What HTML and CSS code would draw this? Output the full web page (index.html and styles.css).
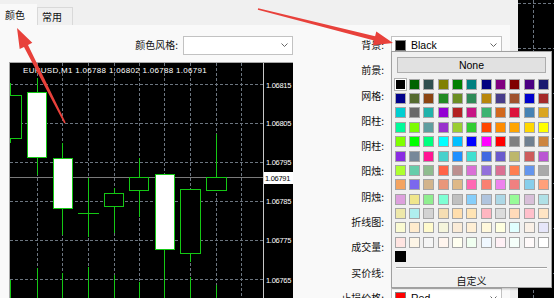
FILE: index.html
```html
<!DOCTYPE html>
<html>
<head>
<meta charset="utf-8">
<link rel="stylesheet" href="styles.css">
</head>
<body>
<div class="screen">
  <div class="dialog">
    <div class="tabs">
      <div class="tab active">颜色</div>
      <div class="tab">常用</div>
    </div>
    <div class="panel">
      <div class="left">
        <div class="style-row">
          <span class="label">颜色风格:</span>
          <div class="combo style-combo"><svg class="chev" width="7" height="4" viewBox="0 0 7 4"><path d="M0.5 0.5 L3.5 3.5 L6.5 0.5"/></svg></div>
        </div>
        <svg class="chart" width="284" height="236" viewBox="9 62 284 236">
          <rect x="9" y="62" width="284" height="236" fill="#000"/>
          <g class="grid">
            <line x1="10" y1="84.5" x2="263" y2="84.5"/>
            <line x1="10" y1="123.5" x2="263" y2="123.5"/>
            <line x1="10" y1="162.5" x2="263" y2="162.5"/>
            <line x1="10" y1="201.5" x2="263" y2="201.5"/>
            <line x1="10" y1="240.5" x2="263" y2="240.5"/>
            <line x1="10" y1="279.5" x2="263" y2="279.5"/>
            <line x1="37.5" y1="63" x2="37.5" y2="298"/>
            <line x1="62.5" y1="63" x2="62.5" y2="298"/>
            <line x1="88.5" y1="63" x2="88.5" y2="298"/>
            <line x1="114.5" y1="63" x2="114.5" y2="298"/>
            <line x1="139.5" y1="63" x2="139.5" y2="298"/>
            <line x1="164.5" y1="63" x2="164.5" y2="298"/>
            <line x1="190.5" y1="63" x2="190.5" y2="298"/>
            <line x1="216.5" y1="63" x2="216.5" y2="298"/>
            <line x1="241.5" y1="63" x2="241.5" y2="298"/>
          </g>
          <line class="bid" x1="10" y1="177.5" x2="263" y2="177.5"/>
          <g class="candles">
            <line x1="10.5" y1="83" x2="10.5" y2="143"/>
            <rect x="0.5" y="95.5" width="21" height="43" class="bear"/>
            <line x1="37.5" y1="78" x2="37.5" y2="175"/>
            <rect x="27.5" y="92.5" width="19" height="65" class="bull"/>
            <line x1="62.5" y1="143" x2="62.5" y2="235"/>
            <rect x="53.5" y="158.5" width="19" height="50" class="bull"/>
            <line x1="88.5" y1="178" x2="88.5" y2="237"/>
            <line x1="78" y1="213.5" x2="99" y2="213.5"/>
            <line x1="114.5" y1="188" x2="114.5" y2="233"/>
            <rect x="104.5" y="193.5" width="19" height="13" class="bear"/>
            <line x1="139.5" y1="158" x2="139.5" y2="217"/>
            <rect x="129.5" y="177.5" width="19" height="13" class="bear"/>
            <line x1="164.5" y1="174" x2="164.5" y2="298"/>
            <rect x="155.5" y="174.5" width="19" height="75" class="bull"/>
            <line x1="190.5" y1="253" x2="190.5" y2="262"/>
            <rect x="180.5" y="189.5" width="20" height="64" class="bear"/>
            <line x1="216.5" y1="134" x2="216.5" y2="177"/>
            <rect x="206.5" y="177.5" width="20" height="13" class="bear"/>
          </g>
          <g class="volumes">
            <line x1="10.5" y1="280" x2="10.5" y2="298"/>
            <line x1="37.5" y1="268" x2="37.5" y2="298"/>
            <line x1="62.5" y1="273" x2="62.5" y2="298"/>
            <line x1="88.5" y1="267" x2="88.5" y2="298"/>
            <line x1="114.5" y1="275" x2="114.5" y2="298"/>
            <line x1="139.5" y1="282" x2="139.5" y2="298"/>
            <line x1="190.5" y1="277" x2="190.5" y2="298"/>
            <line x1="216.5" y1="285" x2="216.5" y2="298"/>
          </g>
          <line class="axis" x1="263.5" y1="63" x2="263.5" y2="298"/>
          <text class="ct head" x="23" y="73">EURUSD,M1 1.06788 1.06802 1.06788 1.06791</text>
          <text class="ct price" x="266" y="88">1.06815</text>
          <text class="ct price" x="266" y="126">1.06805</text>
          <text class="ct price" x="266" y="165">1.06795</text>
          <rect x="264" y="172" width="29" height="12" fill="#fff"/>
          <text class="ct price dark" x="265" y="181">1.06791</text>
          <text class="ct price" x="266" y="204">1.06785</text>
          <text class="ct price" x="266" y="243">1.06775</text>
          <text class="ct price" x="266" y="283">1.06765</text>
          <line class="frame" x1="9.5" y1="62" x2="9.5" y2="298"/>
          <line class="frame" x1="9" y1="62.5" x2="293" y2="62.5"/>
        </svg>
      </div>
      <div class="form">
        <div class="row"><span class="label">背景:</span><div class="combo"><span class="sw" style="background:#000000"></span><span class="cname">Black</span><svg class="chev" width="7" height="4" viewBox="0 0 7 4"><path d="M0.5 0.5 L3.5 3.5 L6.5 0.5"/></svg></div></div>
        <div class="row"><span class="label">前景:</span><div class="combo"><span class="sw" style="background:#ffffff"></span></div></div>
        <div class="row"><span class="label">网格:</span><div class="combo"><span class="sw" style="background:#778899"></span></div></div>
        <div class="row"><span class="label">阳柱:</span><div class="combo"><span class="sw" style="background:#00ff00"></span></div></div>
        <div class="row"><span class="label">阴柱:</span><div class="combo"><span class="sw" style="background:#00ff00"></span></div></div>
        <div class="row"><span class="label">阳烛:</span><div class="combo"><span class="sw" style="background:#ffffff"></span></div></div>
        <div class="row"><span class="label">阴烛:</span><div class="combo"><span class="sw" style="background:#000000"></span></div></div>
        <div class="row"><span class="label">折线图:</span><div class="combo"><span class="sw" style="background:#00ff00"></span></div></div>
        <div class="row"><span class="label">成交量:</span><div class="combo"><span class="sw" style="background:#32cd32"></span></div></div>
        <div class="row"><span class="label">买价线:</span><div class="combo"><span class="sw" style="background:#778899"></span></div></div>
        <div class="row"><span class="label">止损价格:</span><div class="combo"><span class="sw" style="background:#ff0000"></span><span class="cname">Red</span><svg class="chev" width="7" height="4" viewBox="0 0 7 4"><path d="M0.5 0.5 L3.5 3.5 L6.5 0.5"/></svg></div></div>
      </div>
    </div>
  </div>
  <div class="side">
    <svg width="36" height="298" viewBox="518 0 36 298">
      <rect x="518" y="0" width="36" height="298" fill="#000"/>
      <g class="grid">
        <line x1="518" y1="3.5" x2="554" y2="3.5"/>
        <line x1="518" y1="48.5" x2="554" y2="48.5"/>
        <line x1="518" y1="93.5" x2="554" y2="93.5"/>
        <line x1="518" y1="138.5" x2="554" y2="138.5"/>
        <line x1="518" y1="183.5" x2="554" y2="183.5"/>
        <line x1="518" y1="228.5" x2="554" y2="228.5"/>
        <line x1="518" y1="273.5" x2="554" y2="273.5"/>
        <line x1="533.5" y1="0" x2="533.5" y2="298"/>
      </g>
    </svg>
  </div>

  <div class="popup">
    <div class="none-btn">None</div>
    <div class="palette">
      <span class="c sel" style="background:#000000"></span><span class="c" style="background:#006400"></span><span class="c" style="background:#2F4F4F"></span><span class="c" style="background:#808000"></span><span class="c" style="background:#008000"></span><span class="c" style="background:#008080"></span><span class="c" style="background:#000080"></span><span class="c" style="background:#800080"></span><span class="c" style="background:#800000"></span><span class="c" style="background:#4B0082"></span><span class="c" style="background:#191970"></span>
      <span class="c" style="background:#00008B"></span><span class="c" style="background:#556B2F"></span><span class="c" style="background:#8B4513"></span><span class="c" style="background:#228B22"></span><span class="c" style="background:#6B8E23"></span><span class="c" style="background:#2E8B57"></span><span class="c" style="background:#B8860B"></span><span class="c" style="background:#483D8B"></span><span class="c" style="background:#A0522D"></span><span class="c" style="background:#0000CD"></span><span class="c" style="background:#A52A2A"></span>
      <span class="c" style="background:#00CED1"></span><span class="c" style="background:#696969"></span><span class="c" style="background:#20B2AA"></span><span class="c" style="background:#9400D3"></span><span class="c" style="background:#B22222"></span><span class="c" style="background:#C71585"></span><span class="c" style="background:#3CB371"></span><span class="c" style="background:#D2691E"></span><span class="c" style="background:#DC143C"></span><span class="c" style="background:#4682B4"></span><span class="c" style="background:#DAA520"></span>
      <span class="c" style="background:#00FA9A"></span><span class="c" style="background:#7CFC00"></span><span class="c" style="background:#5F9EA0"></span><span class="c" style="background:#9932CC"></span><span class="c" style="background:#9ACD32"></span><span class="c" style="background:#32CD32"></span><span class="c" style="background:#FF4500"></span><span class="c" style="background:#FF8C00"></span><span class="c" style="background:#FFA500"></span><span class="c" style="background:#FFD700"></span><span class="c" style="background:#FFFF00"></span>
      <span class="c" style="background:#7FFF00"></span><span class="c" style="background:#00FF00"></span><span class="c" style="background:#00FF7F"></span><span class="c" style="background:#00FFFF"></span><span class="c" style="background:#00BFFF"></span><span class="c" style="background:#0000FF"></span><span class="c" style="background:#FF00FF"></span><span class="c" style="background:#FF0000"></span><span class="c" style="background:#808080"></span><span class="c" style="background:#708090"></span><span class="c" style="background:#CD853F"></span>
      <span class="c" style="background:#8A2BE2"></span><span class="c" style="background:#778899"></span><span class="c" style="background:#FF1493"></span><span class="c" style="background:#48D1CC"></span><span class="c" style="background:#1E90FF"></span><span class="c" style="background:#40E0D0"></span><span class="c" style="background:#4169E1"></span><span class="c" style="background:#6A5ACD"></span><span class="c" style="background:#BDB76B"></span><span class="c" style="background:#CD5C5C"></span><span class="c" style="background:#BA55D3"></span>
      <span class="c" style="background:#ADFF2F"></span><span class="c" style="background:#66CDAA"></span><span class="c" style="background:#8FBC8F"></span><span class="c" style="background:#FF6347"></span><span class="c" style="background:#BC8F8F"></span><span class="c" style="background:#DA70D6"></span><span class="c" style="background:#9370DB"></span><span class="c" style="background:#DB7093"></span><span class="c" style="background:#FF7F50"></span><span class="c" style="background:#6495ED"></span><span class="c" style="background:#A9A9A9"></span>
      <span class="c" style="background:#F4A460"></span><span class="c" style="background:#7B68EE"></span><span class="c" style="background:#D2B48C"></span><span class="c" style="background:#E9967A"></span><span class="c" style="background:#DEB887"></span><span class="c" style="background:#FF69B4"></span><span class="c" style="background:#FA8072"></span><span class="c" style="background:#EE82EE"></span><span class="c" style="background:#F08080"></span><span class="c" style="background:#87CEEB"></span><span class="c" style="background:#FFA07A"></span>
      <span class="c" style="background:#DDA0DD"></span><span class="c" style="background:#F0E68C"></span><span class="c" style="background:#90EE90"></span><span class="c" style="background:#7FFFD4"></span><span class="c" style="background:#C0C0C0"></span><span class="c" style="background:#87CEFA"></span><span class="c" style="background:#B0C4DE"></span><span class="c" style="background:#ADD8E6"></span><span class="c" style="background:#98FB98"></span><span class="c" style="background:#D8BFD8"></span><span class="c" style="background:#B0E0E6"></span>
      <span class="c" style="background:#EEE8AA"></span><span class="c" style="background:#AFEEEE"></span><span class="c" style="background:#D3D3D3"></span><span class="c" style="background:#F5DEB3"></span><span class="c" style="background:#FFDEAD"></span><span class="c" style="background:#FFE4B5"></span><span class="c" style="background:#FFB6C1"></span><span class="c" style="background:#DCDCDC"></span><span class="c" style="background:#FFDAB9"></span><span class="c" style="background:#FFC0CB"></span><span class="c" style="background:#FFE4C4"></span>
      <span class="c" style="background:#FAFAD2"></span><span class="c" style="background:#FFEBCD"></span><span class="c" style="background:#FFFACD"></span><span class="c" style="background:#F5F5DC"></span><span class="c" style="background:#FAEBD7"></span><span class="c" style="background:#FFEFD5"></span><span class="c" style="background:#FFF8DC"></span><span class="c" style="background:#FFFFE0"></span><span class="c" style="background:#E0FFFF"></span><span class="c" style="background:#FAF0E6"></span><span class="c" style="background:#E6E6FA"></span>
      <span class="c" style="background:#FFE4E1"></span><span class="c" style="background:#FDF5E6"></span><span class="c" style="background:#F5F5F5"></span><span class="c" style="background:#FFF5EE"></span><span class="c" style="background:#FFFFF0"></span><span class="c" style="background:#F0FFF0"></span><span class="c" style="background:#F0F8FF"></span><span class="c" style="background:#FFF0F5"></span><span class="c" style="background:#F5FFFA"></span><span class="c" style="background:#FFFAFA"></span><span class="c" style="background:#FFFFFF"></span>
      <span class="c custom-c" style="background:#000000"></span>
    </div>
    <div class="sep"></div>
    <div class="custom">自定义</div>
  </div>

  <svg class="arrows" width="554" height="298" viewBox="0 0 554 298">
    <polygon points="65.7,122.6 28.0,44.9 32.3,42.7 17,28 19.7,49.1 24.0,46.9 64.3,123.4"/>
    <polygon points="257.8,9.8 374.1,40.5 372.9,45.2 393,43 376.3,31.6 375.1,36.3 258.2,8.2"/>
  </svg>
</div>
</body>
</html>
```

FILE: styles.css
```css
* { box-sizing: border-box; }
html, body { margin: 0; padding: 0; }
body {
  width: 554px;
  height: 298px;
  overflow: hidden;
  background: #f0f0f0;
  font-family: "Noto Sans CJK SC", "Noto Sans", sans-serif;
  font-size: 10px;
  color: #111;
}
.screen {
  position: relative;
  display: flex;
  gap: 8px;
  width: 554px;
  height: 298px;
}
.dialog {
  width: 510px;
  height: 298px;
  display: flex;
  flex-direction: column;
}
.tabs {
  height: 25px;
  display: flex;
  align-items: flex-end;
}
.tab {
  height: 18px;
  width: 36px;
  padding-left: 4px;
  line-height: 17px;
  border: 1px solid #d9d9d9;
  border-bottom: none;
  background: #f0f0f0;
}
.tab.active {
  width: 37px;
  height: 21px;
  line-height: 20px;
  border-color: #f9f9f9;
  background: #f9f9f9;
  padding-left: 4px;
}
.panel {
  flex: 1;
  background: #f9f9f9;
  display: flex;
  padding: 10px 0 0 9px;
  overflow: hidden;
}
.left {
  width: 284px;
  display: flex;
  flex-direction: column;
}
.style-row {
  height: 20px;
  display: flex;
  align-items: center;
  justify-content: flex-end;
  gap: 5px;
}
.label {
  line-height: 14px;
  white-space: nowrap;
}
.combo {
  height: 19px;
  background: #fff;
  border: 1px solid #c2c2c2;
  display: flex;
  align-items: center;
  padding-left: 3px;
  font-family: "Liberation Sans", sans-serif;
  font-size: 10.5px;
  color: #000;
  overflow: hidden;
}
.style-combo { width: 110px; }
.chev {
  margin-left: auto;
  margin-right: 4px;
  flex: none;
}
.chev path {
  fill: none;
  stroke: #666;
  stroke-width: 1;
}
.chart {
  display: block;
  margin-top: 7px;
}
.grid line {
  stroke: #6c7580;
  stroke-width: 1;
  stroke-dasharray: 3 2;
}
.bid { stroke: #7a7a7a; stroke-width: 1; }
.candles line, .candles rect {
  stroke: #14c814;
  stroke-width: 1;
}
.candles .bull { fill: #fff; }
.candles .bear { fill: #000; }
.volumes line { stroke: #14c814; stroke-width: 1; }
.axis { stroke: #c8c8c8; stroke-width: 1; }
.frame { stroke: #a8a8a8; stroke-width: 1; }
.ct {
  font-family: "Liberation Sans", sans-serif;
  font-size: 8px;
  fill: #fff;
}
.ct.head { letter-spacing: 0.3px; }
.ct.price { font-size: 7.5px; letter-spacing: -0.3px; }
.ct.dark { fill: #000; }
.form {
  margin-left: 37px;
  display: flex;
  flex-direction: column;
  gap: 5.3px;
}
.row {
  height: 20px;
  display: flex;
  align-items: center;
  gap: 7px;
  flex: none;
}
.row .label {
  width: 54px;
  text-align: right;
}
.row .combo { width: 111px; }
.sw {
  width: 11px;
  height: 11px;
  flex: none;
  border: 1px solid #808080;
}
.cname { margin-left: 5px; white-space: nowrap; }
.side {
  width: 36px;
  height: 298px;
}
.side svg { display: block; }
.popup {
  position: absolute;
  left: 391px;
  top: 51px;
  width: 161px;
  height: 237px;
  background: #f0f0f0;
  border: 1px solid #a0a0a0;
  box-shadow: 1px 1px 2px rgba(0,0,0,0.25);
  overflow: hidden;
}
.none-btn {
  margin: 5px 5px 0 5px;
  height: 16px;
  border: 1px solid #adadad;
  background: #e1e1e1;
  text-align: center;
  line-height: 14px;
  font-family: "Liberation Sans", sans-serif;
  font-size: 10.5px;
  color: #000;
}
.palette {
  margin: 5.8px 0 0 2.5px;
  display: grid;
  grid-template-columns: repeat(11, 11px);
  grid-auto-rows: 11px;
  gap: 3.35px;
}
.c {
  width: 11px;
  height: 11px;
  border: 1px solid #a6a6a6;
}
.c.sel {
  border-color: #fff;
  box-shadow: 0 0 0 1px #b0b0b0;
}
.c.custom-c { border-color: #000; }
.sep {
  margin: 5px 4px 0 4px;
  border-top: 1px solid #a0a0a0;
  border-bottom: 1px solid #fff;
}
.custom {
  margin-top: 5px;
  text-align: center;
  line-height: 14px;
}
.arrows {
  position: absolute;
  left: 0;
  top: 0;
  pointer-events: none;
}
.arrows polygon { fill: #e8413b; }
```
